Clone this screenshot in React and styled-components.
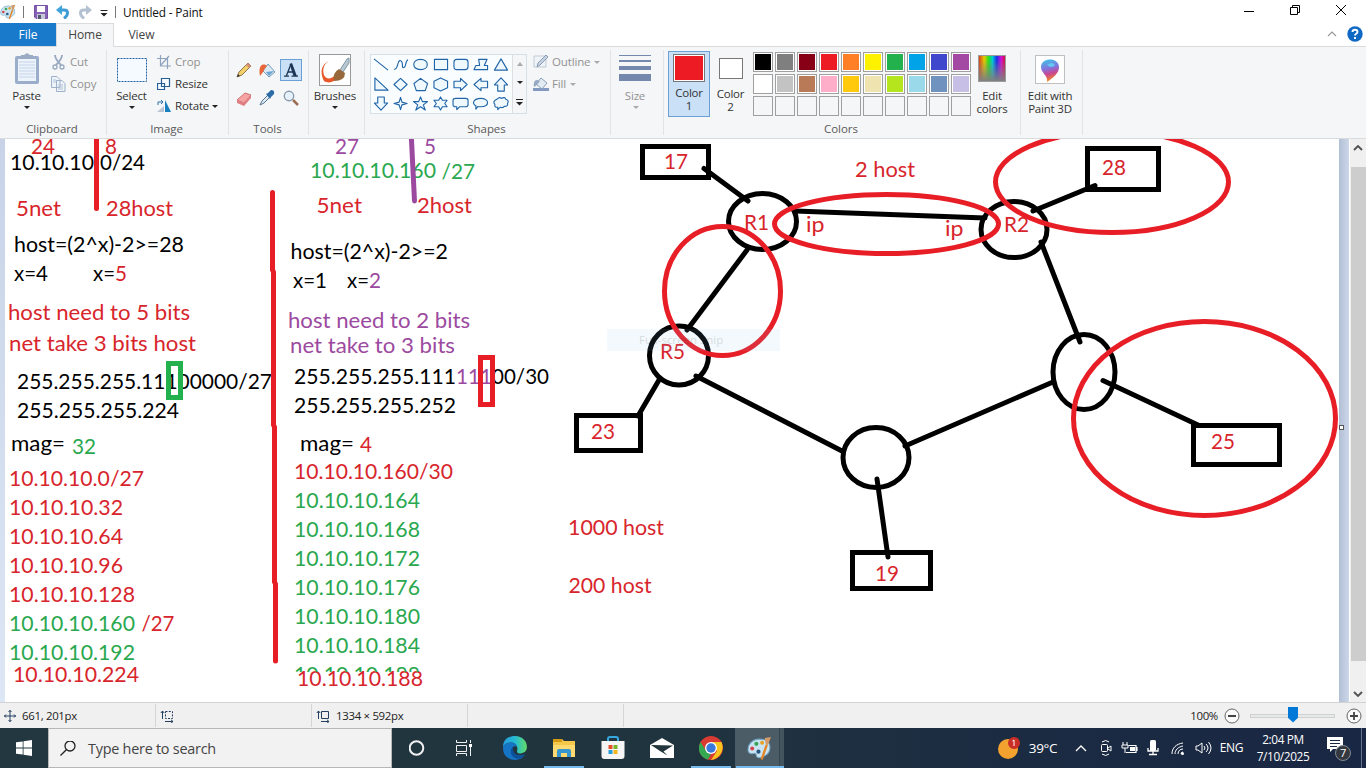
import React from "react";
import styled, { createGlobalStyle } from "styled-components";

const Global = createGlobalStyle`
  * { box-sizing: border-box; }
  body { margin: 0; overflow: hidden; background: #fff; }
  svg { display: block; flex: none; }
`;

const Window = styled.div`
  width: 1366px; height: 768px; display: flex; flex-direction: column;
  font: 12px/16px "Open Sans", "Noto Sans", sans-serif; letter-spacing: -0.2px; color: #333; background: #fff;
`;
const TitleBar = styled.header`
  height: 23px; display: flex; align-items: center; justify-content: space-between; color: #111;
`;
const Row = styled.div`
  display: flex; align-items: ${(p) => p.$align || "center"}; gap: ${(p) => p.$gap || 0}px;
  padding: ${(p) => p.$pad || 0};
`;
const Column = styled.div`
  display: flex; flex-direction: column; align-items: ${(p) => p.$align || "center"};
  gap: ${(p) => p.$gap || 0}px; margin: ${(p) => p.$m || 0};
`;
const Title = styled.span`
  margin-left: 5px; font-size: 11.8px; letter-spacing: -0.15px;
`;
const TabBar = styled.nav`
  height: 24px; display: flex; border-bottom: 1px solid #dadbdc; color: #444;
`;
const Tab = styled.div`
  width: ${(p) => p.$w}px; height: ${(p) => (p.$active ? 24 : 23)}px; text-align: center; line-height: 24px;
  letter-spacing: -0.05px;
  color: ${(p) => (p.$file ? "#fff" : "#444")};
  background: ${(p) => (p.$file ? "#1979ca" : p.$active ? "#f5f6f7" : "transparent")};
  ${(p) => p.$active && "border: 1px solid #dadbdc; border-bottom: 0; line-height: 22px;"}
`;
const TabTools = styled.div`
  margin-left: auto; display: flex; align-items: center; gap: 10px; padding: 0 3px 2px 0;
`;
const Ribbon = styled.section`
  height: 92px; display: flex; background: #f5f6f7; border-bottom: 1px solid #dadbdc;
`;
const Group = styled.div`
  position: relative; width: ${(p) => p.$w}px; height: 91px; flex: none; display: flex; flex-direction: column;
  &::after { content: ""; position: absolute; right: 0; top: 3px; width: 1px; height: 85px; background: #e2e3e4; }
`;
const GroupBody = styled.div`
  height: 74px; display: flex; align-items: flex-start; gap: ${(p) => p.$gap || 0}px; padding: ${(p) => p.$pad || 0};
`;
const GroupName = styled.div`
  height: 16px; text-align: center; line-height: 16px; color: #5a5a5a; font-size: 11.5px; letter-spacing: -0.05px;
  padding-right: 3px;
`;
const Big = styled.div`
  width: ${(p) => p.$w}px; height: ${(p) => p.$h || 68}px; display: flex; flex-direction: column; align-items: center;
  line-height: 13px; text-align: center; color: ${(p) => (p.$off ? "#929292" : "#333")};
  padding-top: ${(p) => p.$top || 0}px; font-size: 11.5px; letter-spacing: -0.2px;
  ${(p) => p.$on && "background: #c9e0f7; border: 1px solid #6ba0d4;"}
`;
const BigLabel = styled.span` margin-top: ${(p) => p.$mt || 0}px; margin-bottom: 4px; white-space: pre; `;
const Command = styled.div`
  height: 22px; display: flex; align-items: center; gap: 3px; color: ${(p) => (p.$off ? "#929292" : "#333")};
  font-size: 11.5px; letter-spacing: -0.15px;
`;
const Caret = styled.i`
  width: 0; height: 0; border: 3px solid transparent; border-top: 3px solid ${(p) => p.$color || "#222"};
  border-bottom: 0; margin-left: ${(p) => p.$ml || 0}px;
`;
const ToolGrid = styled.div` display: grid; grid-template-columns: 23px 24px 22px; grid-template-rows: 28px 28px; `;
const Tool = styled.div`
  width: 22px; height: 22px; display: flex; align-items: center; justify-content: center;
  ${(p) => p.$on && "background: #c9e0f7; border: 1px solid #6ba0d4;"}
`;
const ShapeBox = styled.div` width: 157px; height: 60px; display: flex; border: 1px solid #d5dfe5; background: #fafdff; `;
const ShapeGrid = styled.div`
  width: 142px; padding-right: 1px; display: grid; grid-template-columns: repeat(7, 20px); grid-template-rows: repeat(3, 19.6px);
  border-right: 1px solid #dcdfe2; align-items: center; justify-items: center;
`;
const ShapeScroll = styled.div`
  width: 14px; display: flex; flex-direction: column; justify-content: space-around; align-items: center; background: #f5f6f7;
`;
const Lines = styled.div` display: flex; flex-direction: column; width: 32px; gap: 4px; `;
const Line = styled.div` height: ${(p) => p.$h}px; background: #7488ad; `;
const ColorGrid = styled.div` display: grid; grid-template-columns: repeat(10, 20px); gap: 2px; `;
const Swatch = styled.div`
  width: ${(p) => p.$s || 20}px; height: ${(p) => p.$s || 20}px; border: 1px solid ${(p) => p.$edge || "#a0a0a0"};
  padding: 1px; background: ${(p) => (p.$c ? "#fff" : "transparent")};
  &::before { content: ""; display: block; width: 100%; height: 100%; background: ${(p) => p.$c || "transparent"}; }
`;
const Spectrum = styled.div`
  width: 28px; height: 28px; border: 1px solid #9b9b9b;
  background: linear-gradient(transparent 15%, #808080), linear-gradient(90deg, #d8401c, #e8c800 20%, #20e020 38%, #00c8d8 52%, #1830e8 68%, #d010d8 85%, #d81040);
`;
const Frame = styled.div` width: 30px; height: 30px; border: 1px solid #c0c0c0; background: #fff; display: flex; align-items: center; justify-content: center; `;
const BrushFrame = styled(Frame)` width: 32px; height: 32px; border-color: #999; `;

const Workspace = styled.main` height: 563px; display: flex; background: #fff; `;
const Gutter = styled.div`
  position: relative; width: ${(p) => p.$w}px; height: 563px; flex: none;
  background: ${(p) => (p.$w > 6 ? "linear-gradient(90deg,#b1bfd6,#ccd7e8)" : "linear-gradient(#c8d3e8,#dce6f4)")};
`;
const Handle = styled.i` position: absolute; left: 0; top: 286px; width: 5px; height: 5px; border: 1px solid #555; background: #fff; `;
const Scrollbar = styled.div`
  width: 17px; height: 563px; flex: none; background: #f0f0f0; display: flex; flex-direction: column; align-items: center;
  padding: 6px 0 0; border-left: 1px solid #fff;
`;
const Thumb = styled.div` width: 15px; height: 494px; background: #cdcdcd; margin: 16px 0 30px; `;

const StatusBar = styled.footer`
  height: 26px; display: flex; background: #f0f0f0; border-top: 1px solid #d2d2d2; color: #222; letter-spacing: -0.3px; font-size: 11.4px;
`;
const StatusCell = styled.div`
  width: ${(p) => p.$w}px; height: 23px; margin-top: 1px; display: flex; align-items: center; gap: 6px; padding-left: 4px;
  border-right: 1px solid #d5d5d5;
`;
const Zoom = styled.div` margin-left: auto; display: flex; align-items: center; gap: 6px; padding-right: 4px; `;
const Slider = styled.div` position: relative; width: 85px; height: 4px; border: 1px solid #d0d0d0; background: #e7eaea; margin: 0 5px 0 4px; `;
const Knob = styled.i`
  position: absolute; left: 37px; top: -8px; width: 10px; height: 16px; background: #0078d7;
  clip-path: polygon(0 0, 100% 0, 100% 70%, 50% 100%, 0 70%);
`;

const Taskbar = styled.footer`
  height: 40px; display: flex; align-items: center; color: #fff;
  background: linear-gradient(90deg, #22373f 0%, #20343f 50%, #1b2b42 75%, #1a2744 100%);
`;
const Start = styled.div` width: 48px; display: flex; justify-content: center; `;
const Search = styled.div`
  width: 344px; height: 40px; background: #f2f2f2; border: 1px solid #b7b7b7; color: #444; display: flex; align-items: center; gap: 12px;
  padding: 2px 0 0 11px; font-size: 14.4px; letter-spacing: -0.24px;
`;
const TaskButton = styled.div`
  width: 49px; height: 40px; display: flex; align-items: center; justify-content: center;
  border-bottom: 2px solid transparent; border-top: 2px solid transparent;
  ${(p) => p.$run && "background: linear-gradient(#76b9ed,#76b9ed) center 38px / 40px 2px no-repeat border-box; background-origin: border-box;"}
  ${(p) => p.$active && "background: linear-gradient(#76b9ed,#76b9ed) center 38px / 48px 2px no-repeat border-box, linear-gradient(90deg,#4b5c66 0 44px,#33444e 44px 45px,#44545f 45px); background-origin: border-box;"}
`;
const Tray = styled.div` margin-left: auto; height: 40px; display: flex; align-items: center; letter-spacing: -0.3px; padding-right: 4px; `;
const TraySlot = styled.div`
  width: ${(p) => p.$w}px; display: flex; justify-content: center; text-align: center; white-space: pre; line-height: ${(p) => p.$lh || 18}px;
  font-size: ${(p) => p.$fs || 12}px; letter-spacing: ${(p) => p.$ls ?? -0.35}px;
`;
const PeekEdge = styled.i` width: 1px; height: 40px; background: #66718a; `;

const Icon = ({ w = 16, h = w, vb, children, ...rest }) => (
  <svg width={w} height={h} viewBox={vb || `0 0 ${w} ${h}`} fill="none" {...rest}>{children}</svg>
);

const Palette = ({ size = 16 }) => (
  <Icon w={size} vb="0 0 24 24">
    <path d="M12 3C5 3 1 8 1 13c0 3 2 4 4 4 3-1 4 0 4 2 1 3 5 2 8 0 4-2 5-5 5-8 0-5-4-8-10-8Z" fill="#c9e4f3" stroke="#75a7c4" />
    <circle cx="9" cy="7.500" r="2" fill="#39a657" /><circle cx="14.500" cy="6.500" r="1.900" fill="#e8a028" />
    <circle cx="5" cy="12" r="1.900" fill="#d9434e" /><circle cx="11" cy="15" r="2" fill="#29577f" />
    <path d="m13 22 5-14 2 1-5 14Z" fill="#e58528" /><path d="m18 8-1-6 6-1-3 8Z" fill="#d59a67" />
  </Icon>
);

const ink = { stroke: "#2065a8", strokeWidth: 1.2, fill: "#eef8fd", strokeLinejoin: "round" };
const shapes = [
  "M1 2 16 14", "M1 13C6 14 4 3 8 4c4 1 0 9 4 7 2-1 1-7 4-8", "M8 2.5c9.600 0 9.600 11 0 11s-9.600-11 0-11Z", "M1.500 2.500h14v11h-14Z",
  "M4 2.500h9q3 0 3 3v5q0 3-3 3H4q-3 0-3-3v-5q0-3 3-3Z", "M6 2.500h9L12 9h3.500v4.500H1L3 9h4Z", "M8.500 2 15.500 14H1.500Z",
  "M2 1v13h14Z", "M8 1.500 15 8 8 14.500 1 8Z", "M8 1.500 15.500 7 13 14.500H3.500L1 7Z", "M8 1 15.500 4.500v7L8 15 1 11.500v-7Z",
  "M1 4.500h7V1.500L15 8l-7 6.500v-3H1Z", "M15.500 4.500h-7V1.500L1 8l7.500 6.500v-3h7Z", "M5 15V8.500H1.500L8.500 1l7 7.500H12V15Z",
  "M5 1v6.500H1.500L8.500 15l7-7.500H12V1Z", "M8 1.500 9.500 6.500 15 8 9.500 9.500 8 14.500 6.500 9.500 1 8l5.500-1.500Z",
  "m8 1 2 5h5.500l-4.500 3.500 2 5.500-5-3.500L3 15l2-5.500L.5 6H6Z", "m8 1 2 3.500h5L12.500 8l2.500 3.500h-5L8 15l-2-3.500H1L3.500 8 1 4.500h5Z",
  "M3 2.500h10q3 0 3 2v5q0 2-3 2H7l-3 3v-3H3q-3 0-3-2v-5q0-2 3-2Z", "M8 2.500c10 0 10 9 0 9-1 0-2 0-3-.2L3 14v-3.500C-2 8 1 2.500 8 2.500Z",
  "M4 3.500q3-3 5-1 4-2 4.500 1 4 1 2 4.500 1 3-3.500 3-1 2-4 1-2 1-3 2.500v-2.500q-4 0-3-3-3-3 2-5.500Z",
];

const colors = [
  "#000000", "#7f7f7f", "#880015", "#ed1c24", "#ff7f27", "#fff200", "#22b14c", "#00a2e8", "#3f48cc", "#a349a4",
  "#ffffff", "#c3c3c3", "#b97a57", "#ffaec9", "#ffc90e", "#efe4b0", "#b5e61d", "#99d9ea", "#7092be", "#c8bfe7",
  ...Array(10).fill(null),
];

const K = "#000", R = "#d8252c", G = "#2aa84f", P = "#9c4a9f";
const RED = "#e81e27";
/* text, left, baseline, width, colour */
const notes = [
  ["24", 31, 154, 24, R], ["8", 105, 154, 12, R], ["10.10.10", 10, 170, 84, K], ["0/24", 100, 170, 45, K],
  ["5net", 16, 216, 45, R], ["28host", 106, 216, 67, R], ["host=(2^x)-2>=28", 14, 252, 170, K],
  ["x=4", 14, 281, 34, K], ["x=", 93, 281, 22, K], ["5", 115, 281, 12, R],
  ["host need to 5 bits", 8, 320, 182, R], ["net take 3 bits host", 9, 351, 187, R],
  ["255.255.255.11100000/27", 17, 389, 255, K], ["255.255.255.224", 17, 418, 162, K],
  ["mag=", 11, 451, 54, K], ["32", 72, 454, 24, G],
  ["10.10.10.0/27", 9, 486, 135, R], ["10.10.10.32", 9, 515, 114, R], ["10.10.10.64", 9, 544, 114, R],
  ["10.10.10.96", 9, 573, 114, R], ["10.10.10.128", 9, 602, 126, R], ["10.10.10.160", 9, 631, 126, G],
  ["/27", 141.5, 631, 33, R], ["10.10.10.192", 9, 660, 126, G], ["10.10.10.224", 13, 682, 126, R],
  ["27", 335, 154, 24, P], ["5", 424, 154, 12, P], ["10.10.10.160", 310, 178, 126, G], ["/27", 441.5, 179, 33.5, G],
  ["5net", 316.5, 213, 45.5, R], ["2host", 417, 213, 55, R], ["host=(2^x)-2>=2", 290.5, 259, 157.5, K],
  ["x=1", 293, 288, 34, K], ["x=", 347, 288, 22, K], ["2", 369, 288, 12, P],
  ["host need to 2 bits", 288, 328, 182, P], ["net take to 3 bits", 290, 353, 165, P],
  ["255.255.255.111", 294, 384, 162, K], ["111", 456, 384, 36, P], ["00/30", 492, 384, 57, K],
  ["255.255.255.252", 294, 413, 162, K], ["mag=", 300, 451, 54, K], ["4", 360, 452, 12, R],
  ["10.10.10.160/30", 294, 479, 159, R], ["10.10.10.164", 294, 508, 126, G], ["10.10.10.168", 294, 537, 126, G],
  ["10.10.10.172", 294, 566, 126, G], ["10.10.10.176", 294, 595, 126, G], ["10.10.10.180", 294, 624, 126, G],
  ["10.10.10.184", 294, 653, 126, G], ["10.10.10.188", 297, 686, 126, R],
  ["2 host", 855, 177, 60, R], ["ip", 806, 232, 18.500, R], ["ip", 945, 236, 18.500, R], ["R1", 744, 230, 25, R],
  ["R2", 1004, 232, 25, R], ["R5", 660, 359, 25, R], ["17", 664, 169, 24, R], ["28", 1102, 175, 24, R],
  ["25", 1211, 449, 24, R], ["23", 591, 439, 24, R], ["19", 875, 581, 24, R],
  ["1000 host", 568, 535, 96, R], ["200 host", 568.500, 593, 83, R],
];
const links = [
  "M704 168.500 748 201", "M795 211 985 218", "M1033 211 1095 185.500", "M1041 242 1080 342", "M1103 380.500 1198 425",
  "M1053 382 905 446", "M842 451 696 376", "M659 380 638 416", "M747 250 687 330", "M877 479 888 557",
];
const routers = [[762.5, 221.5, 34, 28], [1014, 229.5, 33, 28], [1084, 372, 31, 37.5], [876, 457.500, 33, 30], [679, 355.500, 29.500, 29.500]];
const rings = [[886.5, 224, 112, 29.5], [722.5, 291, 58, 64.5], [1112, 182, 116.500, 50.500], [1204.500, 418.500, 131, 97]];
const hosts = [[642.5, 146.5, 66, 31], [1087.5, 148.5, 71, 41], [1193.500, 425.500, 86, 39], [576.500, 415.500, 64, 35], [852.500, 552.500, 78, 36]];

const DrawingText = styled.text` font: 21px "Lato", sans-serif; letter-spacing: 0; `;
const SnipText = styled.text` font: 11.5px "Open Sans", sans-serif; fill: #000; `;

const Drawing = () => (
  <svg width="1334" height="563" viewBox="5 139 1334 563" fill="none">
    <g>
      {notes.map(([t, x, y, w, c], i) => (
        <DrawingText key={i} x={x} y={y} textLength={w} fill={c} lengthAdjust="spacingAndGlyphs">{t}</DrawingText>
      ))}
      <clipPath id="sliver"><path d="M290 660h150v12H290Z" /></clipPath>
      <DrawingText x="294" y="682" textLength="126" fill={G} clipPath="url(#sliver)">10.10.10.188</DrawingText>
    </g>
    <g stroke="#000" strokeWidth="5" strokeLinecap="round">
      {links.map((d) => <path key={d} d={d} />)}
      {routers.map(([cx, cy, rx, ry]) => <ellipse key={cx} cx={cx} cy={cy} rx={rx} ry={ry} />)}
      {hosts.map(([x, y, width, height]) => <rect key={x} {...{ x, y, width, height }} />)}
    </g>
    <g stroke={RED} strokeWidth="5" strokeLinecap="round">
      {rings.map(([cx, cy, rx, ry]) => <ellipse key={cx} cx={cx} cy={cy} rx={rx} ry={ry} />)}
      <path d="M96.500 130V208.500M272.500 192.500V270L273.500 272V425L274.500 427V582L275.500 584V661" />
      <path d="M411 130 414.500 201" stroke={P} />
      <rect x="480.5" y="357.5" width="12" height="47" />
      <rect x="168.500" y="363.500" width="12" height="34" stroke="#22b14c" />
    </g>
    <rect x="607" y="329" width="173" height="22" fill="#8cc0e8" opacity=".1" />
    <SnipText x="639" y="344" textLength="84" opacity=".12">Full-screen Snip</SnipText>
  </svg>
);

const DimIcon = ({ dashed }) => (
  <Icon w={14}>
    <path d="M2.500 10V2M.8 4 2.500 2l1.700 2M5 12.500h8M11 10.800l2 1.700-2 1.700" stroke="#243f60" />
    <path d="M5.500 2.500h7v7h-7Z" stroke="#243f60" strokeDasharray={dashed ? "2 1.300" : undefined} />
  </Icon>
);

export default function App() {
  return (
    <Window>
      <Global />
      <TitleBar>
        <Row>
          <Palette />
          <Icon w={14} h={14}><path d="M7.500 1v12" stroke="#777" /></Icon>
          <Row $pad="0 0 0 4px" $gap={8}>
            <Icon w={14}><path d="M.5.5h13v13H2L.5 12Z" fill="#8661b5" stroke="#7450a5" /><path d="M3 1h8v6H3Z" fill="#fff" /><path d="M3 9h8v5H3Z" fill="#c5c7d6" /><path d="M4 10h3v4H4Z" fill="#515a6e" /></Icon>
            <Icon w={14}><path d="M4 5h4c4.500 0 5 5 0 8.500" stroke="#3f9bd6" strokeWidth="3" /><path d="M0 5 6 0v10Z" fill="#3fa3dc" /></Icon>
            <Icon w={14}><path d="M10 5H6c-4.500 0-5 5 0 8.500" stroke="#b3c1d3" strokeWidth="3" /><path d="m14 5-6-5v10Z" fill="#b3c1d3" /></Icon>
            <Icon w={8} h={10}><path d="M.5 3.500h7" stroke="#222" /><path d="M.5 6h7L4 9.500Z" fill="#222" /></Icon>
          </Row>
          <Icon w={10} h={14}><path d="M7.500 1v12" stroke="#777" /></Icon>
          <Title>Untitled - Paint</Title>
        </Row>
        <Row $gap={35} $pad="0 20px 3px 0">
          <Icon w={11}><path d="M0 6.500h10" stroke="#000" /></Icon>
          <Icon w={11} h={10}><path d="M.5 2.500h7v7h-7ZM2.500 2V.5h7v7H8" stroke="#000" /></Icon>
          <Icon w={10}><path d="m0 0 10 10M10 0 0 10" stroke="#000" /></Icon>
        </Row>
      </TitleBar>
      <TabBar>
        <Tab $file $w={56}>File</Tab><Tab $active $w={58}>Home</Tab><Tab $w={55}>View</Tab>
        <TabTools>
          <Icon w={10} h={6}><path d="m1 5 4-4 4 4" stroke="#999" strokeWidth="1.200" /></Icon>
          <Icon w={16}><circle cx="8" cy="8" r="7.700" fill="#0f69c4" /><path d="M5.500 6c0-3 5-3 5 0 0 1.800-2.500 1.700-2.500 3.500M8 11v2" stroke="#fff" strokeWidth="1.900" /></Icon>
        </TabTools>
      </TabBar>
      <Ribbon>
        <Group $w={107}>
          <GroupBody $pad="6px 0 0 2px">
            <Big $w={49}>
              <Icon w={26} h={32}><rect x="1" y="3" width="24" height="28" rx="2" fill="#9aadcb" /><path d="M4 6h18v22H4Z" fill="#edf3fb" /><path d="M5 9h16M5 12h16M5 15h16M5 18h16M5 21h16M5 24h16" stroke="#c5d4e8" /><path d="M7 2h3l3-2 3 2h3v4H7Z" fill="#9cabc4" /></Icon>
              <BigLabel $mt={4}>Paste</BigLabel><Caret />
            </Big>
            <Column $align="flex-start" $m="-2px 0 0 -1px">
              <Command $off><Icon w={17}><path d="M5 1q0 4 6 10M12 1q0 4-6 10" stroke="#98a8c0" strokeWidth="1.800" /><circle cx="5" cy="13" r="2" stroke="#98a8c0" strokeWidth="1.300" /><circle cx="12" cy="13" r="2" stroke="#98a8c0" strokeWidth="1.300" /></Icon>Cut</Command>
              <Command $off><Icon w={17}><path d="M1.500.5H7l3 3v8H1.500ZM6.500 4.500H12l3 3v8H6.500Z" fill="#eef3f9" stroke="#9eb0ca" /><path d="M8 9h5M8 11h5M8 13h5M3 4h3M3 6h3" stroke="#b3c1d6" /></Icon>Copy</Command>
            </Column>
          </GroupBody>
          <GroupName>Clipboard</GroupName>
        </Group>
        <Group $w={122}>
          <GroupBody $pad="6px 0 0 1px">
            <Big $w={47}>
              <Icon w={32} h={32}><rect x="1.500" y="5.500" width="29" height="23" fill="#f4faff" stroke="#1e5fa5" strokeDasharray="2 1" /></Icon>
              <BigLabel $mt={4}>Select</BigLabel><Caret />
            </Big>
            <Column $align="flex-start" $m="-2px 0 0 2px">
              <Command $off><Icon w={15}><path d="M3.500 0v11H14M0 3.500h10.500V14M4 10 12 1" stroke="#8da3bf" strokeWidth="1.200" /></Icon>Crop</Command>
              <Command><Icon w={15}><path d="M4.500 1.500h8v8h-8ZM.5 6.500h7v6h-7Z" fill="#f8fcff" stroke="#246097" strokeWidth="1.200" /></Icon>Resize</Command>
              <Command><Icon w={15}><path d="m0 13 7-6v6Z" fill="#b9c6d2" /><path d="M8 1v12h6Z" fill="#1880be" /><path d="M1 6V3h5M4 1l2 2-2 2" stroke="#2872ad" /></Icon>Rotate<Caret /></Command>
            </Column>
          </GroupBody>
          <GroupName>Image</GroupName>
        </Group>
        <Group $w={80}>
          <GroupBody $pad="12px 0 0 4px">
            <ToolGrid>
              <Tool><Icon w={16}><path d="m1 15 2-5 9-9 3 3-9 9Z" fill="#f3cf69" stroke="#8f7651" /><path d="m10 3 3 3 2-2-3-3Z" fill="#d58e78" /><path d="m1 15 1-3 2 2Z" fill="#333" /></Icon></Tool>
              <Tool><Icon w={17}><path d="m9 2 7 8-6 5-6-6Z" fill="#dceaf5" stroke="#7c9bb6" /><path d="m7 10 8-1-5 5Z" fill="#6ba6d3" /><path d="M8 4C3 0-1 5 1 14l3-4 2-4Z" fill="#ea6538" /></Icon></Tool>
              <Tool $on><Icon w={16}><path d="M1 14.200h5M8.500 14.200H15M3.300 14 8 2M4.500 10h6" stroke="#1e3655" strokeWidth="1.300" /><path d="m6.500 2 4 12h3.400L9 1Z" fill="#1e3655" /></Icon></Tool>
              <Tool><Icon w={16} h={15}><path d="m1 9 8-7 6 2-7 8Z" fill="#f6a3a3" stroke="#ce7373" /><path d="m1 9 7 3v3l-7-3ZM8 12l7-8v3l-7 8Z" fill="#df7f83" /></Icon></Tool>
              <Tool><Icon w={16}><path d="m1 15 2-4 6-6 2 2-6 6Z" fill="#dce8f2" stroke="#55758f" /><path d="m7 4 2-1 3-3q4 0 3 4l-3 3-1 2Z" fill="#2b6ba7" /></Icon></Tool>
              <Tool><Icon w={16}><circle cx="6" cy="6" r="4.700" fill="#e5f2fb" stroke="#8a9bad" strokeWidth="1.400" /><path d="m10 10 5 5" stroke="#9b6d51" strokeWidth="2.500" /></Icon></Tool>
            </ToolGrid>
          </GroupBody>
          <GroupName>Tools</GroupName>
        </Group>
        <Group $w={56}>
          <GroupBody $pad="7px 0 0">
            <Big $w={52} $h={72}>
              <BrushFrame><Icon w={30}><path d="M9 6C-1 11 1 20 4 26c5 3 10 1 13-3l-2-3c-3 4-9 5-11 0C2 14 4 9 9 6Z" fill="#e75729" /><path d="m20 15 7-11 2-1v5l-6 9Z" fill="#b8c8d2" stroke="#8097a6" /><path d="M19 14q-7 4-5 12 11 0 11-8Z" fill="#97683c" /></Icon></BrushFrame>
              <BigLabel $mt={3}>Brushes</BigLabel><Caret />
            </Big>
          </GroupBody>
        </Group>
        <Group $w={246}>
          <GroupBody $gap={6} $pad="7px 0 0 5px">
            <ShapeBox>
              <ShapeGrid>{shapes.map((d, i) => <Icon key={i} w={16} h={15} vb="0 0 17 16" overflow="visible"><path d={d} {...ink} fill={i < 2 ? "none" : ink.fill} /></Icon>)}</ShapeGrid>
              <ShapeScroll><Icon w={6} h={4}><path d="M0 4h6L3 0Z" fill="#aaa" /></Icon><Caret /><Icon w={8} h={7}><path d="M0 .5h7" stroke="#222" /><path d="M0 3h7L3.500 6.500Z" fill="#222" /></Icon></ShapeScroll>
            </ShapeBox>
            <Column $align="flex-start" $m="-3px 0 0">
              <Command $off><Icon w={16}><path d="M1 2h12v11H1Z" fill="#eef3f8" stroke="#c1cbd5" /><path d="m4 13 1-4 8-8 2 2-8 8Z" fill="#c7d2df" stroke="#899dba" /></Icon>Outline<Caret $color="#aaa" $ml={1} /></Command>
              <Command $off><Icon w={16}><path d="M0 12h16v3H0Z" fill="#8399c2" /><path d="m8 2 6 5-5 6-6-5Z" fill="#e2eaf2" stroke="#8ba0bc" /><path d="M7 5C2 2 0 6 1 11l3-2Z" fill="#97aac4" /></Icon>Fill<Caret $color="#aaa" $ml={1} /></Command>
            </Column>
          </GroupBody>
          <GroupName>Shapes</GroupName>
        </Group>
        <Group $w={53}>
          <GroupBody $pad="8px 0 0">
            <Big $w={48} $off>
              <Lines><Line $h={1} /><Line $h={2} /><Line $h={4} /><Line $h={7} /></Lines>
              <BigLabel $mt={8}>Size</BigLabel><Caret $color="#aaa" $ml={1} />
            </Big>
          </GroupBody>
        </Group>
        <Group $w={357}>
          <GroupBody $pad="4px 0 0 4px">
            <Big $w={42} $h={66} $top={2} $on><Swatch $s={32} $edge="#777" $c="#ed1c24" /><BigLabel $mt={4}>{"Color\n1"}</BigLabel></Big>
            <Big $w={41} $h={66} $top={7}><Swatch $s={24} $edge="#777" $c="#fff" /><BigLabel $mt={8}>{"Color\n2"}</BigLabel></Big>
            <Row $pad="1px 0 0 2px"><ColorGrid>{colors.map((c, i) => <Swatch key={i} $c={c} />)}</ColorGrid></Row>
            <Big $w={42} $top={4}><Spectrum /><BigLabel $mt={7}>{"Edit\ncolors"}</BigLabel></Big>
          </GroupBody>
          <GroupName>Colors</GroupName>
        </Group>
        <Group $w={62}>
          <GroupBody $pad="4px 0 0 3px">
            <Big $w={52} $top={4}>
              <Frame>
                <Icon w={24}><defs><linearGradient id="pin" x2=".2" y2="1"><stop stopColor="#38cce8" /><stop offset=".45" stopColor="#8374dd" /><stop offset=".7" stopColor="#c94793" /><stop offset="1" stopColor="#f28b25" /></linearGradient></defs><path d="M9 24C10 17 3 15 3 9c0-10 18-10 18 0 0 6-5 10-12 15Z" fill="url(#pin)" /><path d="M9 7q5-4 8 0-3 4-8 0Z" fill="#63c8f2" /></Icon>
              </Frame>
              <BigLabel $mt={5}>{"Edit with\nPaint 3D"}</BigLabel>
            </Big>
          </GroupBody>
        </Group>
      </Ribbon>
      <Workspace>
        <Gutter $w={5} /><Drawing /><Gutter $w={10}><Handle /></Gutter>
        <Scrollbar>
          <Icon w={10} h={6}><path d="m1 5 4-4 4 4" stroke="#505050" strokeWidth="1.800" /></Icon>
          <Thumb />
          <Icon w={10} h={6}><path d="m1 1 4 4 4-4" stroke="#505050" strokeWidth="1.800" /></Icon>
        </Scrollbar>
      </Workspace>
      <StatusBar>
        <StatusCell $w={156}><Icon w={12}><path d="M6 0v12M0 6h12M4.500 2 6 .5 7.500 2M4.500 10 6 11.500 7.500 10M2 4.500.5 6 2 7.500M10 4.500 11.500 6 10 7.500" stroke="#243f60" /></Icon>661, 201px</StatusCell>
        <StatusCell $w={156}><DimIcon dashed /></StatusCell>
        <StatusCell $w={156}><DimIcon />1334 × 592px</StatusCell>
        <StatusCell $w={156} />
        <Zoom>
          100%
          <Icon w={16}><circle cx="8" cy="8" r="7" fill="#fafafa" stroke="#666" /><path d="M4 8h8" stroke="#444" strokeWidth="2" /></Icon>
          <Slider><Knob /></Slider>
          <Icon w={16}><circle cx="8" cy="8" r="7" fill="#fafafa" stroke="#666" /><path d="M4 8h8M8 4v8" stroke="#444" strokeWidth="1.800" /></Icon>
        </Zoom>
      </StatusBar>
      <Taskbar>
        <Start><Icon w={16}><path d="m0 2.300 6.700-.9v6.200H0ZM7.500 1.300 16 0v7.600H7.500ZM0 8.400h6.700v6.200L0 13.700ZM7.500 8.400H16V16l-8.500-1.200Z" fill="#fff" /></Icon></Start>
        <Search><Icon w={16}><circle cx="10" cy="5" r="5" stroke="#222" strokeWidth="1.300" /><path d="M6.300 8.700.5 14.500" stroke="#222" strokeWidth="1.300" /></Icon>Type here to search</Search>
        <TaskButton><Icon w={16}><circle cx="7.500" cy="8" r="6.800" stroke="#f1f1f1" strokeWidth="2" /></Icon></TaskButton>
        <TaskButton><Icon w={21} h={16}><path d="M1.500 0v2.500h10V0M1.500 5.500h10v6h-10ZM1.500 16v-2.500h10V16M15.500 0v3M15.500 7v9" stroke="#f1f1f1" /><path d="M14 4h3v3h-3Z" fill="#fff" /></Icon></TaskButton>
        <TaskButton><Icon w={26} vb="0 0 24 24"><defs><linearGradient id="edgeTop"><stop stopColor="#2699dd" /><stop offset=".5" stopColor="#25bad3" /><stop offset="1" stopColor="#63dd67" /></linearGradient></defs><path d="M1 11C1 4 6 1 12 1c7 0 11 5 11 10 0 4-3 6-7 6-4-1-1-3-2-6C12 5 4 6 1 11Z" fill="url(#edgeTop)" /><path d="M1 11c3-5 11-6 13 0-4-2-5 1-4 4 2 4 7 5 11 3-4 7-14 6-18 1-2-3-2-5-2-8Z" fill="#1674c5" /><path d="M10 11c-4 3-2 11 6 11 2-1 4-2 5-4-5 2-11 1-11-7Z" fill="#0c509c" /></Icon></TaskButton>
        <TaskButton $run><Icon w={22} h={18}><path d="M0 0h9l2 2h11v16H0Z" fill="#f5c84c" /><path d="M0 0h9v3H0Z" fill="#d69a15" /><path d="M0 6h22v12H0Z" fill="#ffda70" /><path d="M4 18v-6q0-2 2-2h10q2 0 2 2v6h-4v-4H8v4Z" fill="#3795cf" /></Icon></TaskButton>
        <TaskButton><Icon w={24}><path d="M7 6V3q0-2 2-2h6q2 0 2 2v3" stroke="#37a7df" strokeWidth="2" /><path d="M.5 5h23v15q0 3-3 3h-17q-3 0-3-3Z" fill="#f5f5f5" /><path d="M7.500 9h4v4h-4Z" fill="#e74c28" /><path d="M12.500 9h4v4h-4Z" fill="#76b529" /><path d="M7.500 14h4v4h-4Z" fill="#259dd8" /><path d="M12.500 14h4v4h-4Z" fill="#f6b41b" /></Icon></TaskButton>
        <TaskButton><Icon w={24} h={20}><path d="M0 7 12 0l12 7v13H0Z" fill="#fff" /><path d="m1 7 22 .5-9.500 6 4 4-7.500-4.500Z" fill="#22343c" /></Icon></TaskButton>
        <TaskButton $run><Icon w={24}><circle cx="12" cy="12" r="12" fill="#d93b32" /><path d="M1.600 6 7 15l5 3-3 5.600C0 21-2 12 1.600 6Z" fill="#35a852" /><path d="M12 6h10.400c4 8-2 17-10.400 18l6-9Z" fill="#f7c51e" /><circle cx="12" cy="12" r="6" fill="#fff" /><circle cx="12" cy="12" r="4.700" fill="#3979dc" /></Icon></TaskButton>
        <TaskButton $active><Palette size={25} /></TaskButton>
        <Tray>
          <TraySlot $w={25}><Icon w={22}><circle cx="10" cy="12" r="10" fill="#f4a22f" /><circle cx="16" cy="6" r="6" fill="#c92e27" /><path d="m14.500 4 1.500-1v6" stroke="#fff" /></Icon></TraySlot>
          <TraySlot $w={44} $fs={13.500}>39°C</TraySlot>
          <TraySlot $w={32}><Icon w={12} h={7}><path d="m1 6 5-5 5 5" stroke="#fff" strokeWidth="1.300" /></Icon></TraySlot>
          <TraySlot $w={18}><Icon w={12} h={16}><rect x="1.500" y="4.500" width="6" height="7" rx="1" stroke="#fff" /><path d="m8 8 3-2v5L8 9M2 2q4-3 7 0M2 14q4 3 7 0" stroke="#fff" /></Icon></TraySlot>
          <TraySlot $w={28}><Icon w={17} h={12}><path d="M7.500 3.500H15v7H5M16 5v4" stroke="#fff" strokeWidth="1.200" /><path d="M9 5h5v4H9Z" fill="#fff" /><path d="M1 3h6v3H1ZM2 0v3M6 0v3M4 6v5" stroke="#fff" /></Icon></TraySlot>
          <TraySlot $w={20}><Icon w={12} h={16}><rect x="3" y="0" width="6" height="11" rx="1.500" fill="#fff" /><path d="M1 8v3h10V8M6 11v4M2 14.500h8" stroke="#fff" strokeWidth="1.300" /></Icon></TraySlot>
          <TraySlot $w={30}><Icon w={14} h={13}><path d="M1 12C1 6 5 2 12 1M4 12c0-4 3-7 8-8M7 12c0-3 2-5 5-5M10 12q0-2 2-2" stroke="#fff" /><circle cx="11.500" cy="11.500" r="1.500" fill="#fff" /></Icon></TraySlot>
          <TraySlot $w={20}><Icon w={17} h={14}><path d="M1 5h2l4-3v10L3 9H1Z" stroke="#fff" /><path d="M9 5q2 2 0 4M11 3q4 4 0 8M13.500 1q5 6 0 12" stroke="#fff" /></Icon></TraySlot>
          <TraySlot $w={37} $fs={12}>ENG</TraySlot>
          <TraySlot $w={66} $fs={11.800} $lh={17}>{"2:04 PM\n7/10/2025"}</TraySlot>
          <TraySlot $w={45}><Icon w={24} h={25}><path d="M0 1h16v12H6l-3 3v-3H0Z" fill="#fff" /><path d="M3 4.500h10M3 7.500h10M3 10.500h7" stroke="#1a2744" /><circle cx="16" cy="17" r="7.500" fill="#343940" stroke="#858a91" /><text x="16" y="21" textAnchor="middle" fill="#fff" fontSize="11" fontFamily="Open Sans">7</text></Icon></TraySlot>
          <PeekEdge />
        </Tray>
      </Taskbar>
    </Window>
  );
}
